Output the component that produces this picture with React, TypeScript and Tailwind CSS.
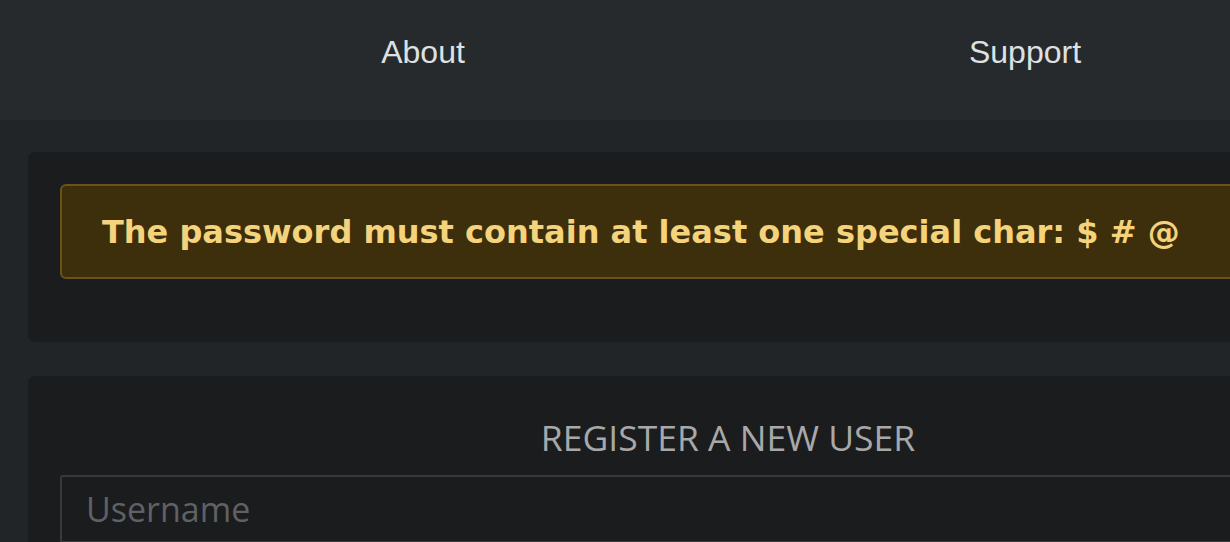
import React from 'react';

export default function App() {
  return (
    <div className="h-screen w-full overflow-hidden bg-[#212527]">
      <div className="w-[1456px]">
        {/* TOP NAV */}
        <nav className="h-[120px] bg-[#262a2c] flex items-start pt-[34px] pl-[122px] font-['Liberation_Sans',Arial,sans-serif] text-[32px] leading-[37px] text-[#dde1e4]">
          <a className="w-[602px] text-center">About</a>
          <a className="w-[602px] text-center">Support</a>
        </nav>

        <main className="pt-[32px] px-[28px]">
          {/* ALERT CARD */}
          <section className="bg-[#1b1c1e] rounded-[7px] p-[32px] h-[190px] mb-[34px]">
            <div className="bg-[#3d2f0b] border-2 border-[#6b5218] rounded-[6px] px-[40px] pt-[22px] pb-[20px] font-['DejaVu_Sans',sans-serif] font-bold text-[32px] leading-[49px] text-[#f4d37c]">
              The password must contain at least one special char: $ # @
            </div>
          </section>

          {/* REGISTER CARD */}
          <section className="bg-[#1b1c1e] rounded-[7px] px-[32px] pt-[36px] pb-[32px] font-['Open_Sans','Noto_Sans',sans-serif]">
            <h2 className="text-center text-[35.5px] leading-[51px] text-[#a8a8a8] mb-[12px]">REGISTER A NEW USER</h2>
            <input
              placeholder="Username"
              className="w-full h-[68px] bg-[#1b1c1e] border-2 border-[#37393c] rounded-[3px] px-[24px] text-[34px] text-[#cfcfcf] placeholder:text-[#5f6164] outline-none"
            />
          </section>
        </main>
      </div>
    </div>
  );
}
